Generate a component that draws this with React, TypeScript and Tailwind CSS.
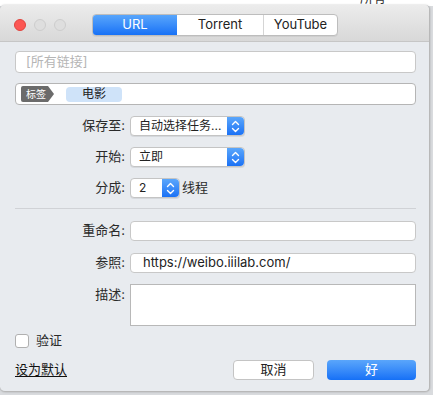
const font = { fontFamily: 'Inter, "Noto Sans CJK SC", sans-serif' };

const Stepper = () => (
  <div className="flex h-full w-[17px] items-center justify-center rounded-r-[4px] bg-gradient-to-b from-[#5aa6fb] to-[#1a71f5]">
    <svg width="9" height="13" viewBox="0 0 9 13" fill="none" stroke="white" strokeWidth="1.4" strokeLinecap="round" strokeLinejoin="round">
      <path d="M1.5 4.5 L4.5 1.5 L7.5 4.5" />
      <path d="M1.5 8.5 L4.5 11.5 L7.5 8.5" />
    </svg>
  </div>
);

const Popup = ({ text, width }: { text: string; width: string }) => (
  <div className={`flex h-[20px] ${width} items-center rounded-[4px] border border-[#c4c4c4] bg-white shadow-[0_1px_0_rgba(0,0,0,0.08)]`}>
    <span className="flex-1 truncate pl-[8px] text-[12px] text-[#222]">{text}</span>
    <Stepper />
  </div>
);

const Label = ({ children, top }: { children: string; top?: boolean }) => (
  <div className={`w-[110px] shrink-0 text-right text-[13px] text-[#2a2a2a] ${top ? "self-start pt-[1px]" : ""}`}>{children}</div>
);

const Field = ({ value }: { value?: string }) => (
  <div className="flex h-[20px] flex-1 items-center rounded-[4px] border border-[#c8c8c8] bg-white px-[12px] text-[13px] text-[#222]">
    {value}
  </div>
);

export default function App() {
  return (
    <div className="relative h-[395px] w-[433px] overflow-hidden bg-[#d9dbde]" style={font}>
      <div className="absolute left-0 top-0 h-[6px] w-[433px] bg-white" />
      <div className="absolute left-[360px] top-0 h-[5px] overflow-hidden">
        <div className="-mt-[12px] text-[13px] text-[#333]">所有</div>
      </div>
      <div className="relative mt-[5px] flex h-[387px] w-[430px] flex-col overflow-hidden rounded-[5px] border-r border-b border-[#b8b8b8] bg-[#e8ebef] shadow-[0_0_2px_rgba(0,0,0,0.25)]">
        {/* title bar */}
        <div className="flex h-[37px] shrink-0 items-center border-b border-[#c6c6c6] bg-gradient-to-b from-[#ececec] to-[#d8d8d8] pl-[14px] pt-[3px]">
          <div className="flex gap-[8px]">
            <div className="h-[12px] w-[12px] rounded-full border border-[#e0443e] bg-[#fc5753]" />
            <div className="h-[12px] w-[12px] rounded-full border border-[#cdcdcd] bg-[#dedede]" />
            <div className="h-[12px] w-[12px] rounded-full border border-[#cdcdcd] bg-[#dedede]" />
          </div>
          <div className="ml-[26px] flex h-[22px] overflow-hidden rounded-[4px] border border-[#bdbdbd] bg-white text-[13px] shadow-[0_1px_0_rgba(0,0,0,0.05)]">
            <div className="flex w-[84px] items-center justify-center bg-gradient-to-b from-[#58a5fb] to-[#1671f6] text-white">URL</div>
            <div className="flex w-[87px] items-center justify-center border-r border-[#d5d5d5] text-[#222]">Torrent</div>
            <div className="flex w-[73px] items-center justify-center text-[#222]">YouTube</div>
          </div>
        </div>

        {/* body */}
        <div className="flex flex-1 flex-col pl-[15px] pr-[13px] pt-[9px]">
          <div className="flex h-[22px] items-center rounded-[4px] border border-[#c8c8c8] bg-white pl-[10px] text-[13px] text-[#b5b5b5]">
            [所有链接]
          </div>
          <div className="mt-[10px] flex h-[22px] items-center rounded-[4px] border border-[#b5b5b5] bg-white pl-[5px]">
            <div className="flex h-[16px] items-center">
              <div className="flex h-full items-center rounded-l-[2px] bg-[#6b6b6b] pl-[5px] pr-[2px] text-[10px] text-white">标签</div>
              <div className="h-0 w-0 border-y-[8px] border-l-[6px] border-y-transparent border-l-[#6b6b6b]" />
            </div>
            <div className="ml-[12px] flex h-[15px] w-[56px] items-center justify-center rounded-[4px] bg-[#cfe3f9] text-[12px] text-[#222]">电影</div>
          </div>

          <div className="mt-[11px] flex flex-col gap-[11px]">
            <div className="flex h-[20px] items-center gap-[5px]">
              <Label>保存至:</Label>
              <Popup text="自动选择任务..." width="w-[115px]" />
            </div>
            <div className="flex h-[20px] items-center gap-[5px]">
              <Label>开始:</Label>
              <Popup text="立即" width="w-[115px]" />
            </div>
            <div className="flex h-[20px] items-center gap-[5px]">
              <Label>分成:</Label>
              <Popup text="2" width="w-[50px]" />
              <span className="-ml-[3px] text-[13px] text-[#2a2a2a]">线程</span>
            </div>
          </div>

          <div className="mt-[10px] h-px bg-[#d0d2d6]" />

          <div className="mt-[11px] flex flex-col gap-[11px]">
            <div className="flex h-[21px] items-center gap-[5px]">
              <Label>重命名:</Label>
              <Field />
            </div>
            <div className="flex h-[21px] items-center gap-[5px]">
              <Label>参照:</Label>
              <Field value="https://weibo.iiilab.com/" />
            </div>
            <div className="flex h-[42px] items-start gap-[5px]">
              <Label top>描述:</Label>
              <div className="h-[42px] flex-1 border border-[#b8b8b8] bg-white" />
            </div>
          </div>

          <div className="mt-[5px] flex items-center gap-[7px]">
            <div className="h-[14px] w-[14px] rounded-[3px] border border-[#b0b0b0] bg-white" />
            <span className="text-[13px] text-[#2a2a2a]">验证</span>
          </div>

          <div className="mt-[9px] flex items-center">
            <span className="text-[13px] text-[#111] underline underline-offset-2">设为默认</span>
            <div className="ml-auto flex gap-[13px]">
              <div className="flex h-[20px] w-[81px] items-center justify-center rounded-[4px] border border-[#c4c4c4] bg-white text-[13px] text-[#222]">取消</div>
              <div className="flex h-[20px] w-[89px] items-center justify-center rounded-[4px] bg-gradient-to-b from-[#5aa6fb] to-[#1570f6] text-[13px] text-white">好</div>
            </div>
          </div>
        </div>
      </div>
    </div>
  );
}
